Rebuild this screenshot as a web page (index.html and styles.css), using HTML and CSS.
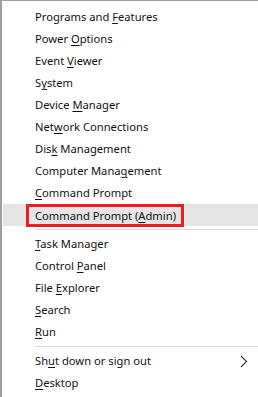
FILE: index.html
```html
<!DOCTYPE html>
<html>
<head>
	<title>Quick Link Menu</title>
	<link rel="stylesheet" href="styles.css">
</head>

<body>
	<div class="menu">
		<div class="item">Programs and <u>F</u>eatures</div>
		<div class="item">Power <u>O</u>ptions</div>
		<div class="item">Event <u>V</u>iewer</div>
		<div class="item">S<u>y</u>stem</div>
		<div class="item">Device <u>M</u>anager</div>
		<div class="item">Net<u>w</u>ork Connections</div>
		<div class="item">Dis<u>k</u> Management</div>
		<div class="item">Computer Mana<u>g</u>ement</div>
		<div class="item"><u>C</u>ommand Prompt</div>
		<div class="item active"><span class="mark">Command Prompt (<u>A</u>dmin)</span></div>
		<div class="sep"></div>
		<div class="item"><u>T</u>ask Manager</div>
		<div class="item">Control <u>P</u>anel</div>
		<div class="item">File <u>E</u>xplorer</div>
		<div class="item"><u>S</u>earch</div>
		<div class="item"><u>R</u>un</div>
		<div class="sep"></div>
		<div class="item">Sh<u>u</u>t down or sign out
			<svg class="arrow" width="8" height="13" viewBox="0 0 8 13">
				<path d="M1 1 L6.5 6.5 L1 12" fill="none" stroke="#333" stroke-width="1.1"/>
			</svg>
		</div>
		<div class="item"><u>D</u>esktop</div>
	</div>
</body>

</html>
```

FILE: styles.css
```css
html, body {
	margin: 0;
	padding: 0;
	background: #fff;
}

.menu {
	width: 258px;
	height: 397px;
	box-sizing: border-box;
	border-left: 2px solid #a0a0a0;
	border-top: 1px solid #a0a0a0;
	padding: 5px 0 0 1px;
	font-family: "Noto Sans", "DejaVu Sans", sans-serif;
	font-size: 11.2px;
	color: #111;
}

.item {
	height: 22px;
	line-height: 21px;
	padding-left: 32px;
	position: relative;
	white-space: nowrap;
}

.item u {
	text-decoration-thickness: 1px;
	text-underline-offset: 2px;
}

.active {
	background: #e5e5e5;
}

.mark {
	position: absolute;
	left: 23px;
	top: 0;
	height: 17px;
	padding: 0 5px 0 6px;
	border: 3px solid #ed1c24;
	line-height: 17px;
}

.sep {
	height: 1px;
	background: #d9d9d9;
	margin: 3px 0 3px 32px;
}

.arrow {
	position: absolute;
	right: 10px;
	top: 5px;
}
```
